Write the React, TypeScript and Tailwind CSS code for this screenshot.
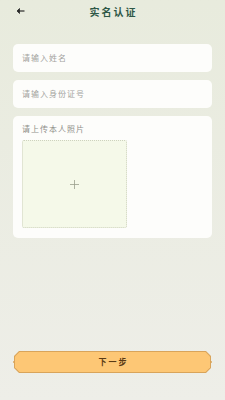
import React from 'react'

const cjk = { fontFamily: '"Noto Sans CJK SC", "Noto Sans", sans-serif' }

const Field = ({ placeholder }: { placeholder: string }) => (
  <div className="h-[28px] rounded-[5px] bg-[#fdfdfb] flex items-center px-[9px]">
    <span className="text-[8px] tracking-[1px] text-[#a3a39e]">{placeholder}</span>
  </div>
)

export default function App() {
  return (
    <div
      className="w-[225px] h-[400px] flex flex-col bg-gradient-to-b from-[#e8ebdd] to-[#eeeee8] overflow-hidden"
      style={cjk}
    >
      <div className="h-[22px] flex items-center relative">
        <svg className="absolute left-[16px] top-[8px]" width="9" height="6" viewBox="0 0 9 6">
          <path d="M8.5 3H2" stroke="#2a2a2a" strokeWidth="1.2" />
          <path d="M3.5 0.5L1 3L3.5 5.5Z" fill="#2a2a2a" stroke="#2a2a2a" strokeWidth="0.8" strokeLinejoin="round" />
        </svg>
        <span className="mx-auto text-[10px] font-bold tracking-[2px] text-[#2e5746] pl-[2px]">实名认证</span>
      </div>

      <div className="px-[13px] pt-[22px] flex flex-col gap-[8px]">
        <Field placeholder="请输入姓名" />
        <Field placeholder="请输入身份证号" />
        <div className="rounded-[5px] bg-[#fdfdfb] px-[9px] pt-[8px] pb-[10px]">
          <div className="text-[8px] tracking-[1px] text-[#8f8f8a] leading-[10px]">请上传本人照片</div>
          <div className="mt-[6px] w-[105px] h-[88px] border border-dotted border-[#cdd2bd] bg-[#f5f9e9] rounded-[2px] flex items-center justify-center">
            <svg width="9" height="9" viewBox="0 0 9 9">
              <path d="M4.5 0V9M0 4.5H9" stroke="#9aa08d" strokeWidth="0.8" />
            </svg>
          </div>
        </div>
      </div>

      <div className="flex-1" />

      <div className="px-[14px] pb-[27px] relative">
        <div
          className="h-[22px] bg-[#d9a45a] p-[1px]"
          style={{ clipPath: 'polygon(5px 0, calc(100% - 5px) 0, 100% 5px, 100% calc(100% - 5px), calc(100% - 5px) 100%, 5px 100%, 0 calc(100% - 5px), 0 5px)' }}
        >
          <div
            className="h-full bg-[#fdc775] flex items-center justify-center"
            style={{ clipPath: 'polygon(4.5px 0, calc(100% - 4.5px) 0, 100% 4.5px, 100% calc(100% - 4.5px), calc(100% - 4.5px) 100%, 4.5px 100%, 0 calc(100% - 4.5px), 0 4.5px)' }}
          >
            <span className="text-[8px] font-bold tracking-[2px] text-[#5a3a14] pl-[2px]">下一步</span>
          </div>
        </div>
        <div className="absolute left-[13px] top-[10px] w-[2px] h-[2px] bg-[#d9a45a] rounded-full" />
        <div className="absolute right-[13px] top-[10px] w-[2px] h-[2px] bg-[#d9a45a] rounded-full" />
      </div>
    </div>
  )
}
